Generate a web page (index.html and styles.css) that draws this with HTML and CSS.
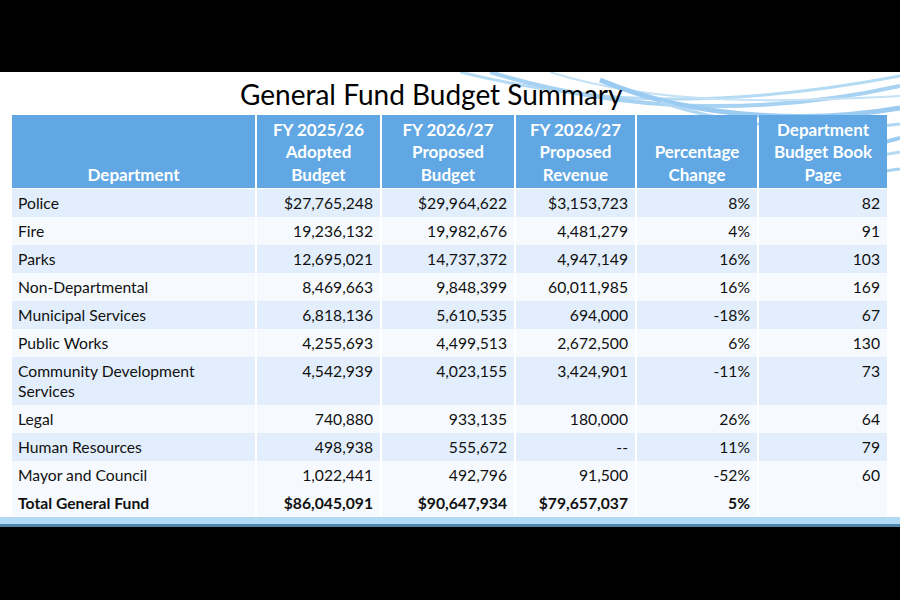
FILE: index.html
```html
<!DOCTYPE html>
<html>
<head lang="en">
    <meta charset="UTF-8">
    <title>General Fund Budget Summary</title>
    <link rel="stylesheet" href="styles.css">
</head>
<body>
<div class="screen">
    <div class="slide">
        <svg class="swoosh" width="440" height="120" viewBox="0 0 440 120">
            <path d="M0 0 C120 30 250 40 440 4" stroke="#b5daf4" stroke-width="3" fill="none"/>
            <path d="M30 0 C160 40 300 45 440 14" stroke="#a7d2f2" stroke-width="4" fill="none"/>
            <path d="M90 0 C200 35 330 30 440 24" stroke="#c4e1f6" stroke-width="2" fill="none"/>
            <path d="M140 8 C240 50 360 50 440 36" stroke="#9bcbf0" stroke-width="5" fill="none"/>
            <path d="M200 30 C290 60 380 60 440 52" stroke="#b0d7f3" stroke-width="3" fill="none"/>
            <path d="M390 80 C410 74 425 70 440 66" stroke="#9bcbf0" stroke-width="4" fill="none"/>
            <path d="M395 88 C415 84 428 82 440 80" stroke="#b8dbf4" stroke-width="3" fill="none"/>
            <path d="M400 104 C418 100 430 98 440 97" stroke="#a7d2f2" stroke-width="3" fill="none"/>
        </svg>
        <h1 class="title">General Fund Budget Summary</h1>
        <table class="budget">
            <colgroup>
                <col class="c1"><col class="c2"><col class="c3"><col class="c4"><col class="c5"><col class="c6">
            </colgroup>
            <thead>
            <tr>
                <th>Department</th>
                <th>FY 2025/26<br>Adopted<br>Budget</th>
                <th>FY 2026/27<br>Proposed<br>Budget</th>
                <th>FY 2026/27<br>Proposed<br>Revenue</th>
                <th>Percentage<br>Change</th>
                <th>Department<br>Budget Book<br>Page</th>
            </tr>
            </thead>
            <tbody>
            <tr class="odd"><td>Police</td><td>$27,765,248</td><td>$29,964,622</td><td>$3,153,723</td><td>8%</td><td>82</td></tr>
            <tr><td>Fire</td><td>19,236,132</td><td>19,982,676</td><td>4,481,279</td><td>4%</td><td>91</td></tr>
            <tr class="odd"><td>Parks</td><td>12,695,021</td><td>14,737,372</td><td>4,947,149</td><td>16%</td><td>103</td></tr>
            <tr><td>Non-Departmental</td><td>8,469,663</td><td>9,848,399</td><td>60,011,985</td><td>16%</td><td>169</td></tr>
            <tr class="odd"><td>Municipal Services</td><td>6,818,136</td><td>5,610,535</td><td>694,000</td><td>-18%</td><td>67</td></tr>
            <tr><td>Public Works</td><td>4,255,693</td><td>4,499,513</td><td>2,672,500</td><td>6%</td><td>130</td></tr>
            <tr class="odd tall"><td>Community Development<br>Services</td><td>4,542,939</td><td>4,023,155</td><td>3,424,901</td><td>-11%</td><td>73</td></tr>
            <tr><td>Legal</td><td>740,880</td><td>933,135</td><td>180,000</td><td>26%</td><td>64</td></tr>
            <tr class="odd"><td>Human Resources</td><td>498,938</td><td>555,672</td><td>--</td><td>11%</td><td>79</td></tr>
            <tr><td>Mayor and Council</td><td>1,022,441</td><td>492,796</td><td>91,500</td><td>-52%</td><td>60</td></tr>
            <tr class="total"><td>Total General Fund</td><td>$86,045,091</td><td>$90,647,934</td><td>$79,657,037</td><td>5%</td><td></td></tr>
            </tbody>
        </table>
    </div>
    <div class="band"></div>
</div>
</body>
</html>
```

FILE: styles.css
```css
*{
    margin: 0;
    padding: 0;
}
body{
    background: #000;
    font-family: Lato, "Open Sans", Arial, sans-serif;
    color: #111;
}
.screen{
    width: 900px;
    height: 600px;
    padding-top: 72px;
    box-sizing: border-box;
}
.slide{
    position: relative;
    height: 445px;
    background: #fff;
}
.swoosh{
    position: absolute;
    top: 0;
    right: 0;
}
.title{
    position: relative;
    height: 43px;
    padding-left: 240px;
    font-size: 28px;
    font-weight: normal;
    line-height: 44px;
    color: #000;
}
.budget{
    position: relative;
    margin-left: 10px;
    table-layout: fixed;
    border-collapse: separate;
    border-spacing: 2px 0;
    font-size: 15.7px;
}
.c1{ width: 243px; }
.c2{ width: 123px; }
.c3{ width: 132px; }
.c4{ width: 119px; }
.c5{ width: 120px; }
.c6{ width: 128px; }
.budget th{
    height: 71px;
    background: #60a7e3;
    color: #fff;
    font-size: 17px;
    font-weight: bold;
    line-height: 22.5px;
    vertical-align: bottom;
    text-align: center;
    padding: 0 2px 2px;
    border-bottom: 1px solid #fff;
}
.budget td{
    height: 20px;
    line-height: 20px;
    padding: 4px 7px 4px 6px;
    text-align: right;
    vertical-align: top;
    background: #f6fafe;
    white-space: nowrap;
}
.budget td:first-child{
    text-align: left;
}
.budget tr.odd td{
    background: #e2eefb;
}
.budget tr.tall td{
    height: 39px;
}
.budget tr.total td{
    font-weight: bold;
    padding-bottom: 3px;
}
.band{
    height: 7px;
    background: #b3daf4;
    border-bottom: 3px solid #4f86ad;
}
```
